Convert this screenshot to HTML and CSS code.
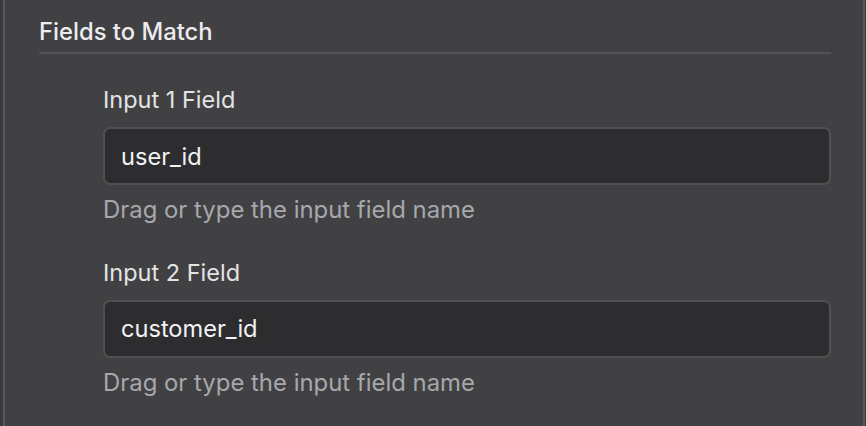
FILE: index.html
```html
<!DOCTYPE html>
<html lang="en">
<head>
<meta charset="utf-8">
<title>Fields to Match</title>
<link rel="stylesheet" href="styles.css">
</head>
<body>
<div class="frame">
  <section class="section">
    <h2 class="section-title">Fields to Match</h2>
    <div class="fields">
      <div class="field">
        <label class="field-label">Input 1 Field</label>
        <div class="field-input">user_id</div>
        <div class="field-help">Drag or type the input field name</div>
      </div>
      <div class="field">
        <label class="field-label">Input 2 Field</label>
        <div class="field-input">customer_id</div>
        <div class="field-help">Drag or type the input field name</div>
      </div>
    </div>
  </section>
</div>
</body>
</html>
```
FILE: styles.css
```css
* { box-sizing: border-box; }
html, body { margin: 0; padding: 0; }
body {
  background: #3a3a3c;
  font-family: Inter, "Noto Sans", sans-serif;
  width: 866px;
  height: 426px;
  overflow: hidden;
}
.frame {
  margin-left: 3px;
  width: 862px;
  height: 426px;
  background: #414143;
  border-left: 2px solid #58585b;
  border-right: 2px solid #58585b;
}
.section {
  padding: 18px 32px 0 34px;
}
.section-title {
  margin: 0;
  font-size: 23.8px;
  line-height: 28px;
  font-weight: 500;
  color: #ececee;
  padding-bottom: 6px;
  border-bottom: 2px solid #535356;
}
.fields {
  display: flex;
  flex-direction: column;
  gap: 34.5px;
  padding: 32px 0 0 64px;
}
.field {
  display: flex;
  flex-direction: column;
}
.field-label {
  font-size: 23.5px;
  line-height: 28px;
  color: #e4e4e6;
}
.field-input {
  margin-top: 13px;
  height: 58px;
  background: #2d2d2f;
  border: 2px solid #505053;
  border-radius: 7px;
  padding: 0 16px 0 16px;
  display: flex;
  align-items: center;
  font-size: 23.6px;
  color: #f2f2f4;
}
.field-help {
  margin-top: 11px;
  font-size: 23.9px;
  line-height: 28px;
  color: #a6a8ac;
}
```
